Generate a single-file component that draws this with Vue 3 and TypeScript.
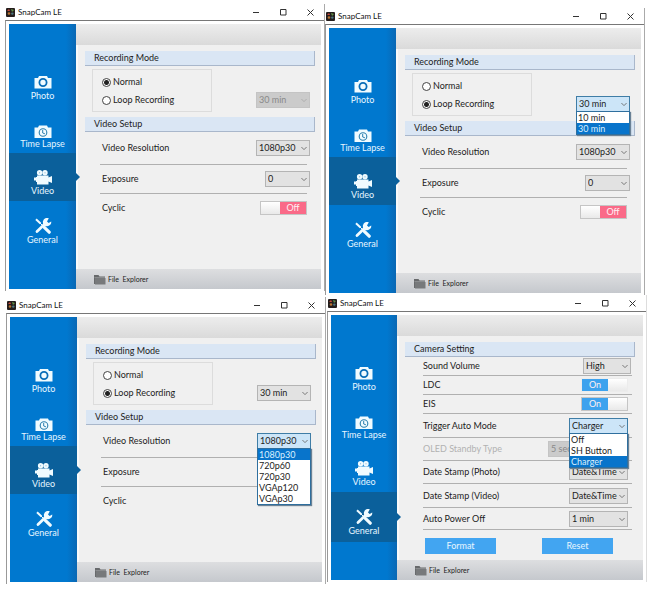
<script setup lang="ts">
import { reactive } from 'vue'

type Page = 'photo' | 'timelapse' | 'video' | 'general'

interface VideoSettings {
  loop: boolean
  showCyclic: boolean
  openList: 'duration' | 'resolution' | null
}

interface AppWindow {
  id: string
  page: Page
  video?: VideoSettings
}

interface GeneralRow {
  key: string
  label: string
  kind: 'select' | 'switch'
  value?: string
  options?: string[]
  size?: string
  disabled?: boolean
  open?: boolean
}

const nav: { page: Page; label: string }[] = [
  { page: 'photo', label: 'Photo' },
  { page: 'timelapse', label: 'Time Lapse' },
  { page: 'video', label: 'Video' },
  { page: 'general', label: 'General' },
]

const durations = ['10 min', '30 min']
const resolutions = ['1080p30', '720p60', '720p30', 'VGAp120', 'VGAp30']

const columns = reactive<AppWindow[][]>([
  [
    { id: 'w1', page: 'video', video: { loop: false, showCyclic: true, openList: null } },
    { id: 'w3', page: 'video', video: { loop: true, showCyclic: false, openList: 'resolution' } },
  ],
  [
    { id: 'w2', page: 'video', video: { loop: true, showCyclic: true, openList: 'duration' } },
    { id: 'w4', page: 'general' },
  ],
])

const generalRows: GeneralRow[] = [
  { key: 'volume', label: 'Sound Volume', kind: 'select', value: 'High', options: ['High', 'Low'], size: 'small' },
  { key: 'ldc', label: 'LDC', kind: 'switch' },
  { key: 'eis', label: 'EIS', kind: 'switch' },
  { key: 'trigger', label: 'Trigger Auto Mode', kind: 'select', value: 'Charger', options: ['Off', 'SH Button', 'Charger'], size: 'large', open: true },
  { key: 'oled', label: 'OLED Standby Type', kind: 'select', value: '5 sec', options: ['5 sec'], size: 'wide', disabled: true },
  { key: 'stamp-photo', label: 'Date Stamp (Photo)', kind: 'select', value: 'Date&Time', options: ['Date&Time'], size: 'large' },
  { key: 'stamp-video', label: 'Date Stamp (Video)', kind: 'select', value: 'Date&Time', options: ['Date&Time'], size: 'large' },
  { key: 'power', label: 'Auto Power Off', kind: 'select', value: '1 min', options: ['1 min'], size: 'large' },
]
</script>

<template>
  <main class="desktop">
    <div v-for="(column, c) in columns" :key="c" class="column">
      <section v-for="win in column" :key="win.id" class="window" :class="win.id">
        <header class="titlebar">
          <svg class="app-icon" viewBox="0 0 9 9">
            <rect width="9" height="9" rx="1" fill="#241d1c" />
            <path d="M1 3l2-2 1 2z" fill="#c9483a" />
            <path d="M5 1l3 1-2 2z" fill="#5f9146" />
            <circle cx="3" cy="5.5" r="1.3" fill="#b8732f" />
            <circle cx="6.3" cy="5.6" r="1.2" fill="#4a7580" />
          </svg>
          <h1 class="title">SnapCam LE</h1>
          <button class="caption" aria-label="Minimize">
            <svg viewBox="0 0 7 7"><path d="M0 3.5h6" /></svg>
          </button>
          <button class="caption" aria-label="Maximize">
            <svg viewBox="0 0 7 7"><path d="M.5.5h5.5v5.5H.5z" /></svg>
          </button>
          <button class="caption" aria-label="Close">
            <svg viewBox="0 0 7 7"><path d="M.5.5l6 6M6.5.5l-6 6" /></svg>
          </button>
        </header>

        <div class="frame">
          <nav class="sidebar">
            <button
              v-for="item in nav"
              :key="item.page"
              class="nav-item"
              :class="[item.page, { active: item.page === win.page }]"
            >
              <svg v-if="item.page === 'photo'" class="nav-icon" viewBox="0 0 18 16">
                <path d="M1 4h3l1-2h8l1 2h3.5v10.500H.5V4z" fill="#f0fbff" />
                <circle cx="9" cy="8.5" r="3.6" fill="none" stroke="#086db8" stroke-width="1.8" />
              </svg>
              <svg v-else-if="item.page === 'timelapse'" class="nav-icon" viewBox="0 0 18 16">
                <path d="M1 5.500h3l1-2h8l1 2h3.500V16H.5V5.500z" fill="#f0fbff" />
                <circle cx="9" cy="10.5" r="3.8" fill="none" stroke="#2a7fae" stroke-width="1.1" />
                <path d="M8.7 8v3l2.2.8" fill="none" stroke="#2a7fae" stroke-width="1" />
              </svg>
              <svg v-else-if="item.page === 'video'" class="nav-icon" viewBox="0 0 18 16">
                <g fill="#f0fbff">
                  <circle cx="5.6" cy="3.8" r="2.7" />
                  <circle cx="11" cy="3.8" r="2.7" />
                  <path d="M3 6.500h11.500v2l3.500-1.500v7l-3.500-1.500V15.500H3V13H2v-1.500H0v-3h2V8h1z" />
                </g>
                <circle cx="5.6" cy="3.8" r=".5" fill="#5b9cc6" />
                <circle cx="11" cy="3.8" r=".5" fill="#5b9cc6" />
              </svg>
              <svg v-else class="nav-icon" viewBox="0 0 18 16">
                <g fill="none" stroke="#f0fbff">
                  <path d="M2 1.200l4.500 4.300" stroke-width="2" />
                  <path d="M6 5l5 5" stroke-width="1" />
                  <path d="M10.300 9.300l4.900 4.900" stroke-width="3.200" stroke-linecap="round" />
                  <path d="M3 13.500l8.500-8.200" stroke-width="2.800" stroke-linecap="round" />
                </g>
                <path d="M14.800.3a4.200 4.200 0 1 0 2.400 3.100l-2.500 1.500-1.700-1.400z" fill="#f0fbff" />
              </svg>
              <span>{{ item.label }}</span>
            </button>
          </nav>

          <div class="content">
            <div class="banner"></div>

            <div v-if="win.video" class="page video-page">
              <h2 class="group-title">Recording Mode</h2>
              <div class="mode-row">
                <fieldset class="modes" aria-label="Recording Mode">
                  <label><input v-model="win.video.loop" type="radio" :name="win.id + '-mode'" :value="false" />Normal</label>
                  <label><input v-model="win.video.loop" type="radio" :name="win.id + '-mode'" :value="true" />Loop Recording</label>
                </fieldset>
                <div class="select medium" :class="{ open: win.video.openList === 'duration', disabled: !win.video.loop }">
                  <select aria-label="Loop duration" :disabled="!win.video.loop">
                    <option v-for="d in durations" :key="d" :selected="d === '30 min'">{{ d }}</option>
                  </select>
                  <svg class="chevron" viewBox="0 0 7 5"><path d="M.5.8l3 3 3-3" /></svg>
                  <ul v-if="win.video.openList === 'duration'" class="list">
                    <li v-for="d in durations" :key="d" :class="{ chosen: d === '30 min' }">{{ d }}</li>
                  </ul>
                </div>
              </div>

              <h2 class="group-title">Video Setup</h2>
              <div class="row resolution">
                <label :for="win.id + '-res'">Video Resolution</label>
                <div class="select medium" :class="{ open: win.video.openList === 'resolution' }">
                  <select :id="win.id + '-res'">
                    <option v-for="r in resolutions" :key="r">{{ r }}</option>
                  </select>
                  <svg class="chevron" viewBox="0 0 7 5"><path d="M.5.8l3 3 3-3" /></svg>
                  <ul v-if="win.video.openList === 'resolution'" class="list">
                    <li v-for="(r, i) in resolutions" :key="r" :class="{ chosen: i === 0 }">{{ r }}</li>
                  </ul>
                </div>
              </div>
              <div class="row">
                <label :for="win.id + '-exp'">Exposure</label>
                <div class="select tiny">
                  <select :id="win.id + '-exp'"><option>0</option></select>
                  <svg class="chevron" viewBox="0 0 7 5"><path d="M.5.8l3 3 3-3" /></svg>
                </div>
              </div>
              <div class="row last">
                <label :for="win.id + '-cyclic'">Cyclic</label>
                <div v-if="win.video.showCyclic" class="switch off">
                  <input :id="win.id + '-cyclic'" type="checkbox" />
                  <span class="knob"></span><span class="state">Off</span>
                </div>
              </div>
            </div>

            <div v-else class="page general-page">
              <h2 class="group-title">Camera Setting</h2>
              <div v-for="row in generalRows" :key="row.key" class="row" :class="[row.key, { muted: row.disabled }]">
                <label :for="row.key">{{ row.label }}</label>
                <div v-if="row.kind === 'select'" class="select" :class="[row.size, { open: row.open, disabled: row.disabled }]">
                  <select :id="row.key" :disabled="row.disabled">
                    <option v-for="o in row.options" :key="o" :selected="o === row.value">{{ o }}</option>
                  </select>
                  <svg class="chevron" viewBox="0 0 7 5"><path d="M.5.8l3 3 3-3" /></svg>
                  <ul v-if="row.open" class="list">
                    <li v-for="o in row.options" :key="o" :class="{ chosen: o === row.value }">{{ o }}</li>
                  </ul>
                </div>
                <div v-else class="switch on">
                  <input :id="row.key" type="checkbox" checked />
                  <span class="state">On</span><span class="knob"></span>
                </div>
              </div>
              <div class="actions">
                <button>Format</button>
                <button>Reset</button>
              </div>
            </div>

            <footer class="footer">
              <button class="explorer">
                <svg viewBox="0 0 12 11">
                  <path d="M0 1h4.500l1 1.500H11V10H0z" fill="#686a6c" />
                  <path d="M1 4h10.500v6.500H1z" fill="#77797b" />
                  <path d="M.5 3.500H11" stroke="#a3a5a8" stroke-width=".6" />
                </svg>
                File&nbsp; Explorer
              </button>
            </footer>
          </div>
        </div>
      </section>
    </div>
  </main>
</template>

<style>
body {
  margin: 0;
  background: #fff;
}
</style>

<style scoped>
* {
  box-sizing: border-box;
}
.desktop {
  display: grid;
  grid-template-columns: 1fr 1fr;
  padding: 0 23px 0 5px;
  font: 9px/12px Lato, "Open Sans", sans-serif;
  color: #1c1c1c;
}
button,
select {
  font: inherit;
  color: inherit;
  margin: 0;
  padding: 0;
  border: 0;
  background: none;
}
.column {
  display: flex;
  flex-direction: column;
  gap: 6px;
  padding-top: 4px;
  min-width: 0;
}
.column + .column {
  gap: 0;
  padding-top: 8px;
}
.window {
  border-right: 1px solid #aaa;
  background: #fff;
}
.w3 {
  margin: 0 -1px 0 1px;
}
.w4 {
  margin: 0 -2px 0 2px;
  border-right-color: #ddd;
}
.titlebar {
  display: flex;
  align-items: center;
  height: 16px;
  padding-left: 1px;
}
.app-icon {
  width: 9px;
  height: 9px;
}
.title {
  flex: 1;
  margin: 0 0 0 3px;
  font: 8px/12px Lato, sans-serif;
  color: #111;
}
.caption {
  display: grid;
  place-items: center;
  width: 27px;
  height: 14px;
}
.caption svg {
  width: 7px;
  height: 7px;
  fill: none;
  stroke: #333;
  stroke-width: 1;
}
.frame {
  display: flex;
  padding: 3px 3px 2px;
  border-top: 1px solid #777;
  border-left: 1px solid #999;
}
.sidebar {
  flex: none;
  width: 67px;
  padding-top: 33px;
  background: linear-gradient(90deg, #0078cf 85%, #0a68b4);
}
.w4 .sidebar {
  width: 66px;
}
.nav-item {
  position: relative;
  display: flex;
  flex-direction: column;
  align-items: center;
  justify-content: flex-end;
  width: 100%;
  height: 48px;
  padding-bottom: 3px;
  color: #e6f6ff;
}
.nav-item.video {
  padding-bottom: 4px;
}
.nav-item.general {
  height: 50px;
  padding-bottom: 5px;
}
.nav-item.active {
  background: #0b609b;
}
.nav-item.active::after {
  content: "";
  position: absolute;
  z-index: 1;
  left: 100%;
  top: 50%;
  margin-top: -4px;
  border: 4px solid transparent;
  border-left-color: #0b609b;
  border-right: 0;
}
.nav-icon {
  width: 18px;
  height: 16px;
}
.content {
  flex: 1;
  display: flex;
  flex-direction: column;
  min-width: 0;
  min-height: 265px;
  background: #f0f0f0;
}
.banner {
  height: 21px;
  background: linear-gradient(#ededed, #dadada);
}
.page {
  flex: 1;
  padding: 6px 6px 0 7px;
  border-left: 2px solid #fafafa;
}
.general-page {
  padding-left: 6px;
  padding-right: 8px;
}
.group-title {
  height: 15px;
  margin: 0;
  padding-left: 9px;
  border: solid #a9b7cb;
  border-width: 0 1px 1px 0;
  background: #dae6f4;
  font: inherit;
  line-height: 14px;
}
.mode-row {
  display: flex;
  justify-content: space-between;
  align-items: flex-end;
  height: 51px;
  padding: 3px 5px 5px 7px;
}
.mode-row .select {
  margin-bottom: 4px;
}
.modes {
  display: flex;
  flex-direction: column;
  gap: 6px;
  width: 120px;
  height: 43px;
  margin: 0;
  padding: 6px 9px;
  border: 1px solid #dcdcdc;
}
.modes label {
  display: flex;
  align-items: center;
  gap: 2px;
  height: 12px;
  white-space: nowrap;
}
.modes input {
  appearance: none;
  width: 9px;
  height: 9px;
  margin: 0;
  border: 1px solid #444;
  border-radius: 50%;
  background: #fff;
}
.modes input:checked {
  background: radial-gradient(circle, #222 0 2px, #fff 3px);
}
.row {
  display: flex;
  align-items: center;
  justify-content: space-between;
  height: 29px;
  margin: 0 8px 0 15px;
  border-bottom: 1px solid #b0b0b0;
}
.row > label {
  padding-left: 2px;
  white-space: nowrap;
}
.row.resolution {
  height: 33px;
}
.row.last {
  height: 27px;
  border: 0;
}
.row .select {
  margin-right: -3px;
}
.select {
  position: relative;
  flex: none;
  height: 16px;
  border: 1px solid #b4b4b4;
  background: #e2e2e2;
}
.select select {
  appearance: none;
  display: block;
  width: 100%;
  height: 14px;
  padding-left: 2px;
  line-height: 14px;
  opacity: 1;
}
.select.tiny {
  width: 45px;
}
.select.small {
  width: 48px;
}
.select.medium {
  width: 54px;
}
.select.large {
  width: 59px;
}
.select.wide {
  width: 80px;
}
.select.disabled {
  background: #cbcbcb;
  border-color: #c4c4c4;
  color: #898989;
}
.select.open {
  border-color: #3f7da6;
  background: #cce5f8;
}
.chevron {
  position: absolute;
  right: 2px;
  top: 5px;
  width: 6px;
  height: 5px;
  fill: none;
  stroke: #666;
  pointer-events: none;
}
.disabled .chevron {
  stroke: #aaa;
}
.list {
  position: absolute;
  z-index: 3;
  top: 14px;
  left: -1px;
  right: -1px;
  margin: 0;
  padding: 0;
  border: 1px solid #2f6f9e;
  background: #fff;
  box-shadow: 1px 1px 1px #6a8195;
  list-style: none;
  line-height: 11px;
  color: #1c1c1c;
}
.list li {
  height: 11px;
  padding-left: 1px;
  white-space: nowrap;
}
.list .chosen {
  background: #0874cb;
  color: #d9f0ff;
}
.switch {
  position: relative;
  display: flex;
  width: 47px;
  height: 14px;
  border: 1px solid #c5c5c5;
}
.switch input {
  position: absolute;
  inset: 0;
  width: 100%;
  height: 100%;
  margin: 0;
  opacity: 0;
}
.knob {
  flex: 1;
  background: linear-gradient(#fff, #e9e9e9);
}
.state {
  width: 26px;
  background: #fa6a88;
  color: #fff0f3;
  line-height: 12px;
  text-align: center;
}
.on .state {
  background: #3da2ee;
}
.ldc .switch {
  border-color: #ececec;
}
.general-page .row {
  height: 23px;
  margin: 0 3px 0 18px;
}
.general-page .row > label {
  padding: 0;
}
.general-page .volume,
.general-page .ldc,
.general-page .eis {
  height: 19px;
}
.general-page .trigger,
.general-page .stamp-video {
  height: 24px;
}
.general-page .power {
  height: 22px;
}
.general-page .select,
.general-page .switch {
  margin-right: 4px;
}
.general-page .small {
  margin-right: 1px;
}
.muted > label {
  color: #b2b2b2;
}
.actions {
  display: flex;
  justify-content: space-between;
  margin: 8px 22px 0 20px;
}
.actions button {
  width: 71px;
  height: 16px;
  background: #42a5f1;
  color: #e8f6ff;
}
.footer {
  display: flex;
  align-items: center;
  height: 20px;
  padding-left: 18px;
  background: linear-gradient(#dddee0, #c5c8cd);
}
.explorer {
  display: flex;
  align-items: center;
  gap: 2px;
  font: 7px/12px Lato, sans-serif;
}
.explorer svg {
  width: 12px;
  height: 11px;
}
</style>
